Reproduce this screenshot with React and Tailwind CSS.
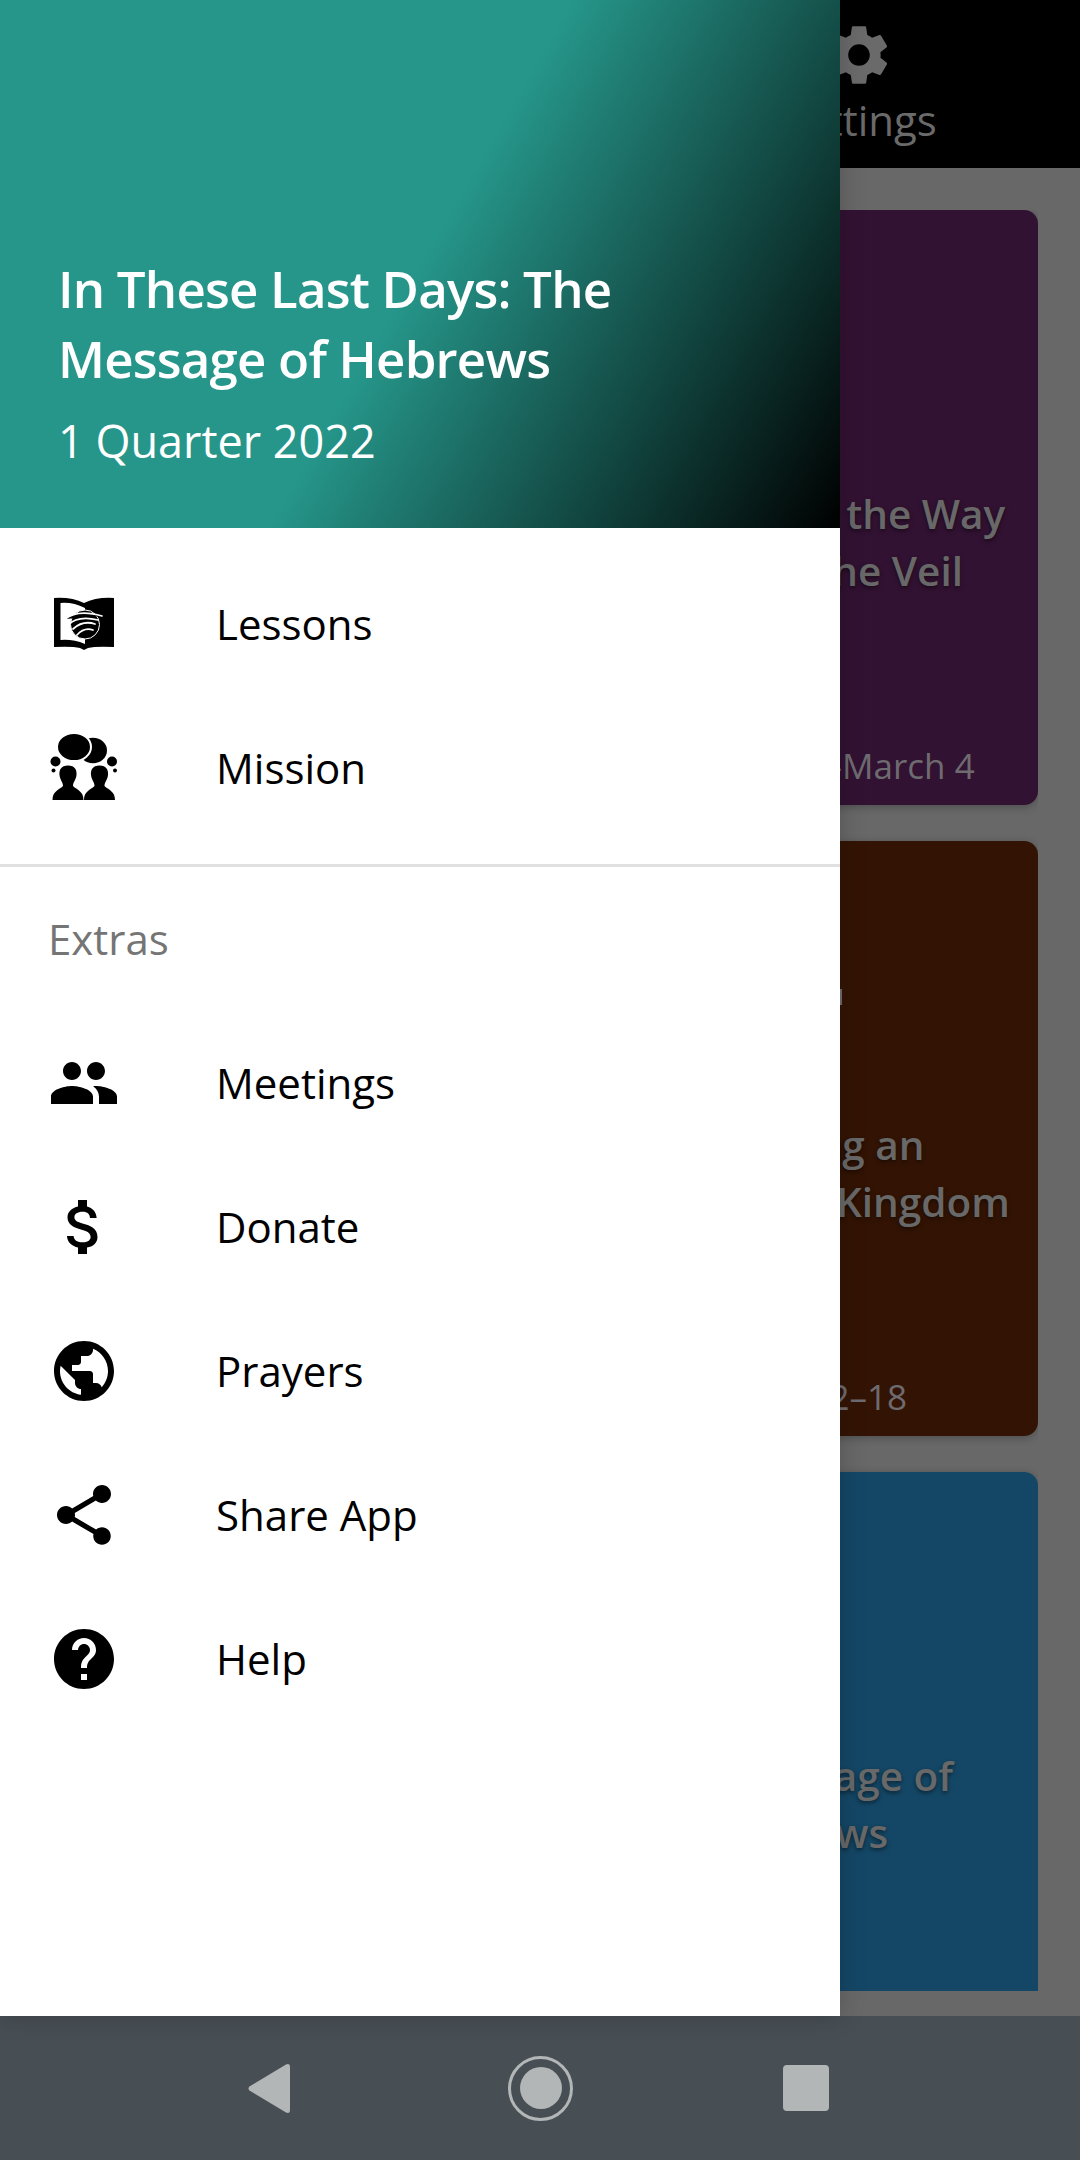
import React from 'react';

const font = { fontFamily: '"Open Sans", sans-serif' };

const Icon = ({ d, className = 'w-[72px] h-[72px]' }) => (
    <svg viewBox="0 0 24 24" className={className} fill="currentColor">
        <path d={d} />
    </svg>
);

const ICONS = {
    settings: 'M19.14 12.94c.04-.3.06-.61.06-.94 0-.32-.02-.64-.07-.94l2.03-1.58c.18-.14.23-.41.12-.61l-1.92-3.32c-.12-.22-.37-.29-.59-.22l-2.39.96c-.5-.38-1.03-.7-1.62-.94l-.36-2.54c-.04-.24-.24-.41-.48-.41h-3.84c-.24 0-.43.17-.47.41l-.36 2.54c-.59.24-1.13.57-1.62.94l-2.39-.96c-.22-.08-.47 0-.59.22L2.74 8.87c-.12.21-.08.47.12.61l2.03 1.58c-.05.3-.07.62-.07.94s.02.64.07.94l-2.03 1.58c-.18.14-.23.41-.12.61l1.92 3.32c.12.22.37.29.59.22l2.39-.96c.5.38 1.03.7 1.62.94l.36 2.54c.05.24.24.41.48.41h3.84c.24 0 .44-.17.47-.41l.36-2.54c.59-.24 1.13-.56 1.62-.94l2.39.96c.22.08.47 0 .59-.22l1.92-3.32c.12-.22.07-.47-.12-.61l-2.01-1.58zM12 15.6c-1.98 0-3.6-1.62-3.6-3.6s1.62-3.6 3.6-3.6 3.6 1.62 3.6 3.6-1.62 3.6-3.6 3.6z',
    group: 'M16 11c1.66 0 2.99-1.34 2.99-3S17.66 5 16 5c-1.66 0-3 1.34-3 3s1.34 3 3 3zm-8 0c1.66 0 2.99-1.34 2.99-3S9.66 5 8 5C6.34 5 5 6.34 5 8s1.34 3 3 3zm0 2c-2.33 0-7 1.17-7 3.5V19h14v-2.5c0-2.33-4.67-3.5-7-3.5zm8 0c-.29 0-.62.02-.97.05 1.16.84 1.97 1.97 1.97 3.45V19h6v-2.5c0-2.33-4.67-3.5-7-3.5z',
    money: 'M11.8 10.9c-2.27-.59-3-1.2-3-2.15 0-1.09 1.01-1.85 2.7-1.85 1.78 0 2.44.85 2.5 2.1h2.21c-.07-1.72-1.12-3.3-3.21-3.81V3h-3v2.16c-1.94.42-3.5 1.68-3.5 3.61 0 2.31 1.91 3.46 4.7 4.13 2.5.6 3 1.48 3 2.41 0 .69-.49 1.79-2.7 1.79-2.06 0-2.87-.92-2.98-2.1h-2.2c.12 2.19 1.76 3.42 3.68 3.83V21h3v-2.15c1.95-.37 3.5-1.5 3.5-3.55 0-2.84-2.43-3.81-4.7-4.4z',
    globe: 'M12 2C6.48 2 2 6.48 2 12s4.48 10 10 10 10-4.48 10-10S17.52 2 12 2zm-1 17.93c-3.95-.49-7-3.85-7-7.93 0-.62.08-1.21.21-1.79L9 15v1c0 1.1.9 2 2 2v1.93zm6.9-2.54c-.26-.81-1-1.39-1.9-1.39h-1v-3c0-.55-.45-1-1-1H8v-2h2c.55 0 1-.45 1-1V7h2c1.1 0 2-.9 2-2v-.41c2.93 1.19 5 4.06 5 7.41 0 2.08-.8 3.97-2.1 5.39z',
    share: 'M18 16.08c-.76 0-1.44.3-1.96.77L8.91 12.7c.05-.23.09-.46.09-.7s-.04-.47-.09-.7l7.05-4.11c.54.5 1.25.81 2.04.81 1.66 0 3-1.34 3-3s-1.34-3-3-3-3 1.34-3 3c0 .24.04.47.09.7L8.04 9.81C7.5 9.31 6.79 9 6 9c-1.66 0-3 1.34-3 3s1.34 3 3 3c.79 0 1.5-.31 2.04-.81l7.12 4.16c-.05.21-.08.43-.08.65 0 1.61 1.31 2.92 2.92 2.92 1.61 0 2.92-1.31 2.92-2.92s-1.31-2.92-2.92-2.92z',
    help: 'M12 2C6.48 2 2 6.48 2 12s4.48 10 10 10 10-4.48 10-10S17.52 2 12 2zm1 17h-2v-2h2v2zm2.07-7.75l-.9.92C13.45 12.9 13 13.5 13 15h-2v-.5c0-1.1.45-2.1 1.17-2.83l1.24-1.26c.37-.36.59-.86.59-1.41 0-1.1-.9-2-2-2s-2 .9-2 2H8c0-2.21 1.79-4 4-4s4 1.79 4 4c0 .88-.36 1.68-.93 2.25z',
};

// book with the globe mark, drawn in a 72 unit box
const BookIcon = () => (
    <svg viewBox="0 0 72 72" className="w-[72px] h-[72px]">
        <path d="M6 10 Q24 9 36 15 Q48 9 66 10 V59 Q48 58 40 60 L36 62 L32 60 Q24 58 6 59 Z" fill="#000" />
        <path d="M12.5 15 Q25 14 37 20 V56 Q25 51 12.5 52 Z" fill="#fff" />
        <circle cx="37" cy="36.5" r="14.5" fill="#000" stroke="#fff" strokeWidth="1" />
        <g fill="none" stroke="#fff" strokeLinecap="round">
            <path d="M17 31 Q30 21 54 28" strokeWidth="1.6" fill="#000" />
            <path d="M20 37 Q30 27 50 32" strokeWidth="1.8" />
            <path d="M25 41 Q35 32 47 36" strokeWidth="1.8" />
            <path d="M29 47 Q36 39 45 42" strokeWidth="1.8" />
        </g>
    </svg>
);

// two people under speech bubbles, drawn in a 72 unit box
const MissionIcon = () => (
    <svg viewBox="0 0 72 72" className="w-[72px] h-[72px]" fill="#000">
        <ellipse cx="45" cy="18.5" rx="14" ry="12.7" />
        <ellipse cx="26" cy="15" rx="17" ry="14" stroke="#fff" strokeWidth="2" />
        <circle cx="7.5" cy="29.5" r="5" />
        <circle cx="64" cy="29.5" r="5" />
        <circle cx="5.5" cy="38.5" r="2" />
        <circle cx="67" cy="38.5" r="2" />
        <path d="M20 33.5 C13 33.5 11 38 11.5 43 C12 48 15 50 15 54 C11 58 4.5 59 4.5 68 H35.5 C35.5 59 29 58 25 54 C25 50 28 48 28.5 43 C29 38 27 33.5 20 33.5 Z" />
        <path d="M51.5 33.5 C44.5 33.5 42.5 38 43 43 C43.5 48 46.5 50 46.5 54 C42.5 58 36 59 36 68 H67 C67 59 60.5 58 56.5 54 C56.5 50 59.5 48 60 43 C60.5 38 58.5 33.5 51.5 33.5 Z" />
    </svg>
);

const MenuItem = ({ icon, label }) => (
    <div className="flex items-center h-[144px] pl-[48px]">
        <div className="w-[168px] shrink-0">{icon}</div>
        <span className="text-[42px] leading-none text-black">{label}</span>
    </div>
);

const LessonCard = ({ color, title, date, children }) => (
    <div className={`relative h-[595px] shrink-0 rounded-[14px] flex justify-end shadow-[0_2px_8px_rgba(0,0,0,0.25)] ${color}`}>
        {children}
        <div className="w-[472px] flex flex-col items-center pt-[275px] pb-[16px] text-[#686868]">
            <h3 className="text-[40.5px] leading-[57px] font-semibold text-center whitespace-pre-line [text-shadow:0_2px_4px_rgba(0,0,0,0.5)]">{title}</h3>
            {date && <p className="mt-auto text-[35px] leading-[46px] text-[#6e6b70]">{date}</p>}
        </div>
    </div>
);

const App = () => {
    return (
        <div className="relative w-[1080px] h-[2160px] overflow-hidden flex flex-col bg-[#686868]" style={font}>
            {/* page behind the drawer */}
            <div className="h-[168px] shrink-0 bg-black flex justify-end pr-[141px] text-[#6a6a6a]">
                <div className="flex flex-col items-center w-[160px] pt-[19px]">
                    <Icon d={ICONS.settings} />
                    <span className="text-[42px] leading-[52px] mt-[3px] whitespace-nowrap">Settings</span>
                </div>
            </div>
            <div className="h-[1848px] shrink-0 pt-[42px] pb-[25px] pl-[42px] pr-[42px]">
                <div className="h-full overflow-hidden flex flex-col gap-[36px]">
                    <LessonCard color="bg-[#321232]" title={'Jesus Opens the Way\nThrough the Veil'} date="February 26–March 4" />
                    <LessonCard color="bg-[#331404]" title={'Receiving an\nUnshakable Kingdom'} date="March 12–18">
                        <div className="absolute left-[798px] top-[148px] w-[2px] h-[16px] bg-[#6f6f6f]" />
                    </LessonCard>
                    <LessonCard color="bg-[#144766]" title={'The Message of\nHebrews'} />
                </div>
            </div>

            {/* nav bar */}
            <div className="h-[144px] shrink-0 bg-[#474e54] flex items-center pl-[248px]">
                <svg viewBox="0 0 42 49" className="w-[42px] h-[49px]" fill="#b2b6b6">
                    <path d="M38 0.5 Q42 -1 42 3 V46 Q42 50 38 48.5 L1.5 26.5 Q-0.5 24.5 1.5 22.5 Z" />
                </svg>
                <div className="ml-[218px] w-[65px] h-[65px] rounded-full border-[3px] border-[#b2b6b6] flex items-center justify-center">
                    <div className="w-[42px] h-[42px] rounded-full bg-[#b2b6b6]" />
                </div>
                <div className="ml-[210px] w-[46px] h-[46px] rounded-[4px] bg-[#b2b6b6]" />
            </div>

            {/* drawer */}
            <div className="absolute left-0 top-0 w-[840px] h-[2016px] bg-white flex flex-col shadow-[0_0_24px_rgba(0,0,0,0.2)]">
                <div className="h-[528px] shrink-0 bg-[linear-gradient(120deg,#26968a_50%,#000_100%)] flex flex-col justify-end pl-[58px] pb-[57px] text-white">
                    <h1 className="text-[51px] leading-[70px] font-semibold tracking-[-0.8px]">In These Last Days: The<br />Message of Hebrews</h1>
                    <p className="text-[45px] leading-[60px] mt-[18px]">1 Quarter 2022</p>
                </div>
                <div className="pt-[24px] pb-[24px] border-b-[3px] border-[#e0e0e0]">
                    <MenuItem icon={<BookIcon />} label="Lessons" />
                    <MenuItem icon={<MissionIcon />} label="Mission" />
                </div>
                <div className="h-[144px] pt-[45px] pl-[48px] text-[42px] leading-[54px] text-[#757575]">Extras</div>
                <MenuItem icon={<Icon d={ICONS.group} />} label="Meetings" />
                <MenuItem icon={<Icon d={ICONS.money} />} label="Donate" />
                <MenuItem icon={<Icon d={ICONS.globe} />} label="Prayers" />
                <MenuItem icon={<Icon d={ICONS.share} />} label="Share App" />
                <MenuItem icon={<Icon d={ICONS.help} />} label="Help" />
            </div>
        </div>
    );
};

export default App;
